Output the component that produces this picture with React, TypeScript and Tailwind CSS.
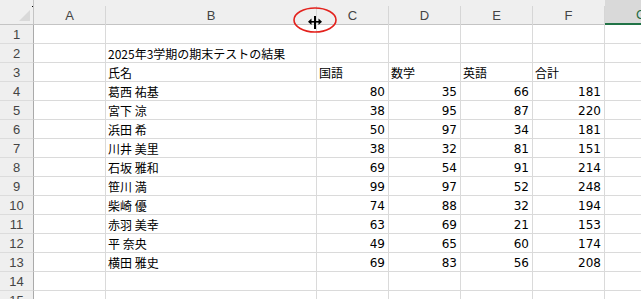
const COLS = [
  { key: 'A', w: 'w-[72px]' },
  { key: 'B', w: 'w-[211px]' },
  { key: 'C', w: 'w-[72px]' },
  { key: 'D', w: 'w-[72px]' },
  { key: 'E', w: 'w-[72px]' },
  { key: 'F', w: 'w-[72px]' },
  { key: 'G', w: 'w-[72px]' },
];

type Cell = string | number | null;

const STUDENTS: [string, number, number, number, number][] = [
  ['葛西 祐基', 80, 35, 66, 181],
  ['宮下 涼', 38, 95, 87, 220],
  ['浜田 希', 50, 97, 34, 181],
  ['川井 美里', 38, 32, 81, 151],
  ['石坂 雅和', 69, 54, 91, 214],
  ['笹川 満', 99, 97, 52, 248],
  ['柴崎 優', 74, 88, 32, 194],
  ['赤羽 美幸', 63, 69, 21, 153],
  ['平 奈央', 49, 65, 60, 174],
  ['横田 雅史', 69, 83, 56, 208],
];

const ROWS: Cell[][] = [
  [null, null, null, null, null, null, null],
  [null, '2025年3学期の期末テストの結果', null, null, null, null, null],
  [null, '氏名', '国語', '数学', '英語', '合計', null],
  ...STUDENTS.map(([name, a, b, c, d]) => [null, name, a, b, c, d, null] as Cell[]),
  [null, null, null, null, null, null, null],
  [null, null, null, null, null, null, null],
];

const textFont = { fontFamily: '"Noto Sans CJK JP", "Noto Sans", sans-serif' };
const numFont = { fontFamily: '"DejaVu Sans", "Noto Sans CJK JP", sans-serif' };
const headFont = { fontFamily: '"Liberation Sans", "Noto Sans", sans-serif' };

function ColumnHeader({ label, w, selected }: { label: string; w: string; selected: boolean }) {
  if (selected) {
    return (
      <div className={`${w} h-[25px] shrink-0 flex flex-col bg-[#d9d9d9] border-b-2 border-[#217346]`}>
        <div className="flex-1 flex items-center justify-center pt-[5px] text-[13px] text-[#1d6b3f]" style={headFont}>
          {label}
        </div>
      </div>
    );
  }
  return (
    <div className={`${w} h-[25px] shrink-0 flex flex-col border-b border-[#c4c4c4]`}>
      <div
        className="mt-[6px] flex-1 flex items-center justify-center border-r border-[#d6d6d6] text-[13px] text-[#444]"
        style={headFont}
      >
        {label}
      </div>
    </div>
  );
}

function DataCell({ value, w }: { value: Cell; w: string }) {
  const isNum = typeof value === 'number';
  return (
    <div
      className={`${w} h-[19px] shrink-0 border-r border-b border-[#dadada] flex items-center overflow-visible whitespace-nowrap text-[12px] text-black leading-none pt-[2px] ${
        isNum ? 'justify-end pr-[3px]' : 'pl-[2px]'
      }`}
      style={isNum ? numFont : textFont}
    >
      {value}
    </div>
  );
}

export default function App() {
  return (
    <div className="relative w-[641px] h-[299px] overflow-hidden bg-white">
      {/* column headers */}
      <div className="flex bg-[#efefef]">
        <div className="w-[34px] h-[25px] shrink-0 border-b border-r border-[#c4c4c4]">
          <svg width="33" height="24" viewBox="0 0 33 24">
            <polygon points="30,10 30,21 19,21" fill="#d9d9d9" />
            <rect x="32" y="6" width="1" height="1" fill="#000" />
          </svg>
        </div>
        {COLS.map((c) => (
          <ColumnHeader key={c.key} label={c.key} w={c.w} selected={c.key === 'G'} />
        ))}
      </div>

      {/* rows */}
      {ROWS.map((row, i) => (
        <div key={i} className="flex">
          <div
            className="w-[34px] h-[19px] shrink-0 bg-[#efefef] border-r border-[#aaaaaa] border-b border-b-[#dcdcdc] flex items-center justify-center text-[13px] text-[#444] pt-[1px]"
            style={headFont}
          >
            {i + 1}
          </div>
          {row.map((cell, j) => (
            <DataCell key={j} value={cell} w={COLS[j].w} />
          ))}
        </div>
      ))}

      {/* resize cursor with red highlight */}
      <svg className="absolute left-[292px] top-[6px]" width="46" height="30" viewBox="0 0 46 30">
        <ellipse cx="23" cy="14" rx="21" ry="12" fill="none" stroke="#e3211c" strokeWidth="1.6" />
        <rect x="22" y="10" width="2" height="13" fill="#000" />
        <rect x="17" y="15" width="12" height="1.6" fill="#000" />
        <polygon points="16,15.8 19.5,12.5 19.5,19" fill="#000" />
        <polygon points="30,15.8 26.5,12.5 26.5,19" fill="#000" />
      </svg>
    </div>
  );
}
